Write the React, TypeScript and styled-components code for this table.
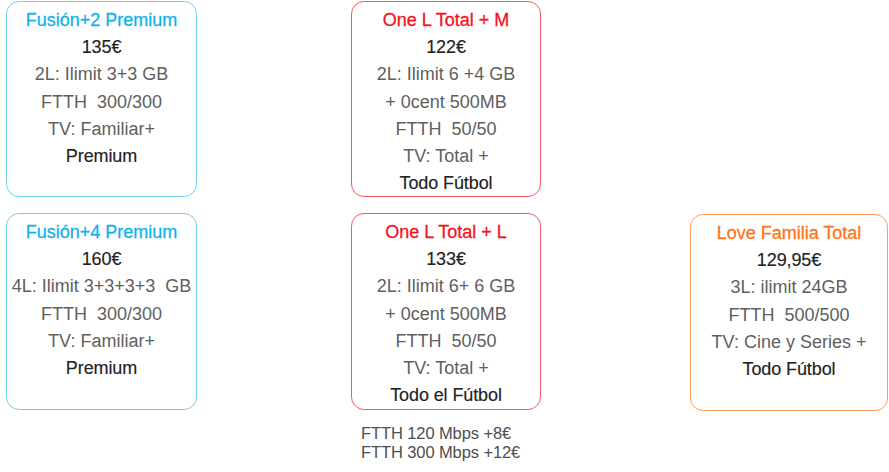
import React from "react";
import styled, { createGlobalStyle } from "styled-components";

const Global = createGlobalStyle`
  html, body { margin: 0; padding: 0; background: #ffffff; }
  body { font-family: "Liberation Sans", Arial, sans-serif; }
`;

type Tone = "blue" | "red" | "orange";

const borderColor: Record<Tone, string> = {
  blue: "#6fd0f2",
  red: "#f25a5e",
  orange: "#ff9f5a",
};
const titleColor: Record<Tone, string> = {
  blue: "#12b2ea",
  red: "#f2141c",
  orange: "#ff7417",
};

const Page = styled.div`
  width: 889px;
  height: 472px;
  box-sizing: border-box;
  padding: 1px 0 0 6px;
  display: grid;
  grid-template-columns: 191px 154px 190px 149px 198px;
  grid-template-rows: 196px 216px auto;
`;

const Card = styled.div<{ $tone: Tone; $col: number; $row: number; $offset?: number }>`
  grid-column: ${(p) => p.$col};
  grid-row: ${(p) => p.$row};
  box-sizing: border-box;
  height: ${(p) => (p.$row === 1 ? 196 : 197)}px;
  margin-top: ${(p) => (p.$row === 2 ? 16 + (p.$offset ?? 0) : 0)}px;
  border: 1.4px solid ${(p) => borderColor[p.$tone]};
  border-radius: 13px;
  padding: 5px 0 0;
  display: flex;
  flex-direction: column;
  align-items: center;
`;

const Title = styled.div<{ $tone: Tone }>`
  font-family: "Liberation Sans", Arial, sans-serif;
  font-weight: 400;
  font-size: 18px;
  letter-spacing: 0;
  line-height: 27px;
  color: ${(p) => titleColor[p.$tone]};
  -webkit-text-stroke: 0.3px ${(p) => titleColor[p.$tone]};
  white-space: nowrap;
`;

const Line = styled.div<{ $strong?: boolean }>`
  font-family: "Liberation Sans", Arial, sans-serif;
  font-weight: 400;
  font-size: 18px;
  letter-spacing: ${(p) => (p.$strong ? "-0.1px" : "0")};
  line-height: 27.3px;
  color: ${(p) => (p.$strong ? "#222222" : "#606060")};
  -webkit-text-stroke: ${(p) => (p.$strong ? "0.15px #222222" : "0")};
  white-space: pre;
`;

const Note = styled.div`
  grid-column: 3;
  grid-row: 3;
  padding: 11px 0 0 10px;
  font-family: "Liberation Sans", Arial, sans-serif;
  font-size: 16.5px;
  letter-spacing: -0.1px;
  line-height: 19px;
  color: #4e4e4e;
  white-space: pre;
`;

type Plan = {
  tone: Tone;
  col: number;
  row: number;
  offset?: number;
  title: string;
  lines: { text: string; strong?: boolean }[];
};

const plans: Plan[] = [
  {
    tone: "blue",
    col: 1,
    row: 1,
    title: "Fusión+2 Premium",
    lines: [
      { text: "135€", strong: true },
      { text: "2L: Ilimit 3+3 GB" },
      { text: "FTTH  300/300" },
      { text: "TV: Familiar+" },
      { text: "Premium", strong: true },
    ],
  },
  {
    tone: "red",
    col: 3,
    row: 1,
    title: "One L Total + M",
    lines: [
      { text: "122€", strong: true },
      { text: "2L: Ilimit 6 +4 GB" },
      { text: "+ 0cent 500MB" },
      { text: "FTTH  50/50" },
      { text: "TV: Total +" },
      { text: "Todo Fútbol", strong: true },
    ],
  },
  {
    tone: "blue",
    col: 1,
    row: 2,
    title: "Fusión+4 Premium",
    lines: [
      { text: "160€", strong: true },
      { text: "4L: Ilimit 3+3+3+3  GB" },
      { text: "FTTH  300/300" },
      { text: "TV: Familiar+" },
      { text: "Premium", strong: true },
    ],
  },
  {
    tone: "red",
    col: 3,
    row: 2,
    title: "One L Total + L",
    lines: [
      { text: "133€", strong: true },
      { text: "2L: Ilimit 6+ 6 GB" },
      { text: "+ 0cent 500MB" },
      { text: "FTTH  50/50" },
      { text: "TV: Total +" },
      { text: "Todo el Fútbol", strong: true },
    ],
  },
  {
    tone: "orange",
    col: 5,
    row: 2,
    offset: 1,
    title: "Love Familia Total",
    lines: [
      { text: "129,95€", strong: true },
      { text: "3L: ilimit 24GB" },
      { text: "FTTH  500/500" },
      { text: "TV: Cine y Series +" },
      { text: "Todo Fútbol", strong: true },
    ],
  },
];

export default function App() {
  return (
    <>
      <Global />
      <Page>
        {plans.map((p) => (
          <Card key={p.title} $tone={p.tone} $col={p.col} $row={p.row} $offset={p.offset}>
            <Title $tone={p.tone}>{p.title}</Title>
            {p.lines.map((l, i) => (
              <Line key={i} $strong={l.strong}>
                {l.text}
              </Line>
            ))}
          </Card>
        ))}
        <Note>{"FTTH 120 Mbps +8€\nFTTH 300 Mbps +12€"}</Note>
      </Page>
    </>
  );
}
